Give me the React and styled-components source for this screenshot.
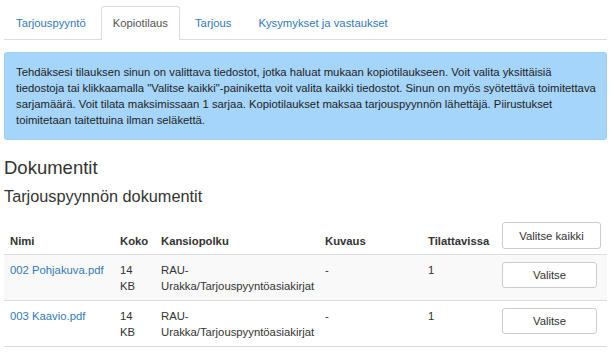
import React from 'react'
import styled, { createGlobalStyle } from 'styled-components'

const LINK = '#337ab7'
const BORDER = '#ddd'

const TABS = ['Tarjouspyyntö', 'Kopiotilaus', 'Tarjous', 'Kysymykset ja vastaukset']

const DOCS = [
  { name: '002 Pohjakuva.pdf', size: '14 KB', path: 'RAU-Urakka/Tarjouspyyntöasiakirjat', desc: '-', count: 1 },
  { name: '003 Kaavio.pdf', size: '14 KB', path: 'RAU-Urakka/Tarjouspyyntöasiakirjat', desc: '-', count: 1 },
]

const GlobalStyle = createGlobalStyle`
  body {
    margin: 0;
    background: #fff;
    font-family: "Liberation Sans", Arial, sans-serif;
    font-size: 11.3px;
    line-height: 16px;
    color: #333;
  }
`

function App() {
  return (
    <Page>
      <GlobalStyle />
      <Tabs>
        {TABS.map((t, i) => (
          <Tab key={t} active={i === 1}>{t}</Tab>
        ))}
      </Tabs>
      <Alert>
        Tehdäksesi tilauksen sinun on valittava tiedostot, jotka haluat mukaan kopiotilaukseen. Voit valita yksittäisiä
        tiedostoja tai klikkaamalla "Valitse kaikki"-painiketta voit valita kaikki tiedostot. Sinun on myös syötettävä
        toimitettava sarjamäärä. Voit tilata maksimissaan 1 sarjaa. Kopiotilaukset maksaa tarjouspyynnön lähettäjä.
        Piirustukset toimitetaan taitettuina ilman seläkettä.
      </Alert>
      <Heading>Dokumentit</Heading>
      <SubHeading>Tarjouspyynnön dokumentit</SubHeading>
      <Table>
        <colgroup>
          <col style={{ width: 110 }} />
          <col style={{ width: 41 }} />
          <col style={{ width: 164 }} />
          <col style={{ width: 103 }} />
          <col style={{ width: 74 }} />
          <col style={{ width: 111 }} />
        </colgroup>
        <thead>
          <tr>
            <Th>Nimi</Th>
            <Th>Koko</Th>
            <Th>Kansiopolku</Th>
            <Th>Kuvaus</Th>
            <Th>Tilattavissa</Th>
            <Th><Button wide>Valitse kaikki</Button></Th>
          </tr>
        </thead>
        <tbody>
          {DOCS.map((d, i) => (
            <Row key={d.name} striped={i % 2 === 0}>
              <Td><Link href="#">{d.name}</Link></Td>
              <Td>{d.size}</Td>
              <Td>{d.path}</Td>
              <Td>{d.desc}</Td>
              <Td>{d.count}</Td>
              <Td><Button>Valitse</Button></Td>
            </Row>
          ))}
        </tbody>
      </Table>
    </Page>
  )
}

export default App

const Page = styled.div`
  width: 603px;
  padding: 0 6px 0 4px;
`

const Tabs = styled.ul`
  display: flex;
  margin: 0;
  padding: 6px 0 0;
  list-style: none;
  border-bottom: 1px solid ${BORDER};
`

const Tab = styled.li`
  margin-right: 3px;
  margin-bottom: -1px;
  padding: 8px 11px;
  border: 1px solid transparent;
  border-bottom: none;
  border-radius: 3px 3px 0 0;
  color: ${LINK};
  cursor: pointer;

  ${props => props.active && `
    background: #fff;
    color: #555;
    border-color: ${BORDER};
    padding-bottom: 9px;
  `}
`

const Alert = styled.div`
  margin-top: 12px;
  padding: 11px 6px 11px 11px;
  border: 1px solid #9dcdf5;
  border-radius: 3px;
  background: #a6d5fb;
  color: #222;
`

const Heading = styled.h3`
  margin: 16px 0 0;
  font-size: 18.5px;
  font-weight: 400;
  line-height: 24px;
`

const SubHeading = styled.h4`
  margin: 5px 0 0;
  font-size: 16.3px;
  font-weight: 400;
  line-height: 22px;
`

const Table = styled.table`
  width: 603px;
  margin-top: 9px;
  table-layout: fixed;
  border-collapse: collapse;
`

const Th = styled.th`
  padding: 6px 6px 5px;
  text-align: left;
  vertical-align: bottom;
  font-weight: 700;
  border-bottom: 1px solid ${BORDER};
`

const Row = styled.tr`
  background: ${props => (props.striped ? '#f9f9f9' : '#fff')};
`

const Td = styled.td`
  padding: 7px 6px 6px;
  vertical-align: top;
  border-bottom: 1px solid ${BORDER};
`

const Link = styled.a`
  color: ${LINK};
  text-decoration: none;
`

const Button = styled.button`
  display: block;
  width: ${props => (props.wide ? '99px' : '95px')};
  height: ${props => (props.wide ? '27px' : '26px')};
  padding: 0;
  border: 1px solid #ccc;
  border-radius: 3px;
  background: #fff;
  color: #333;
  font: inherit;
  font-weight: 400;
  text-align: center;
  cursor: pointer;
`
